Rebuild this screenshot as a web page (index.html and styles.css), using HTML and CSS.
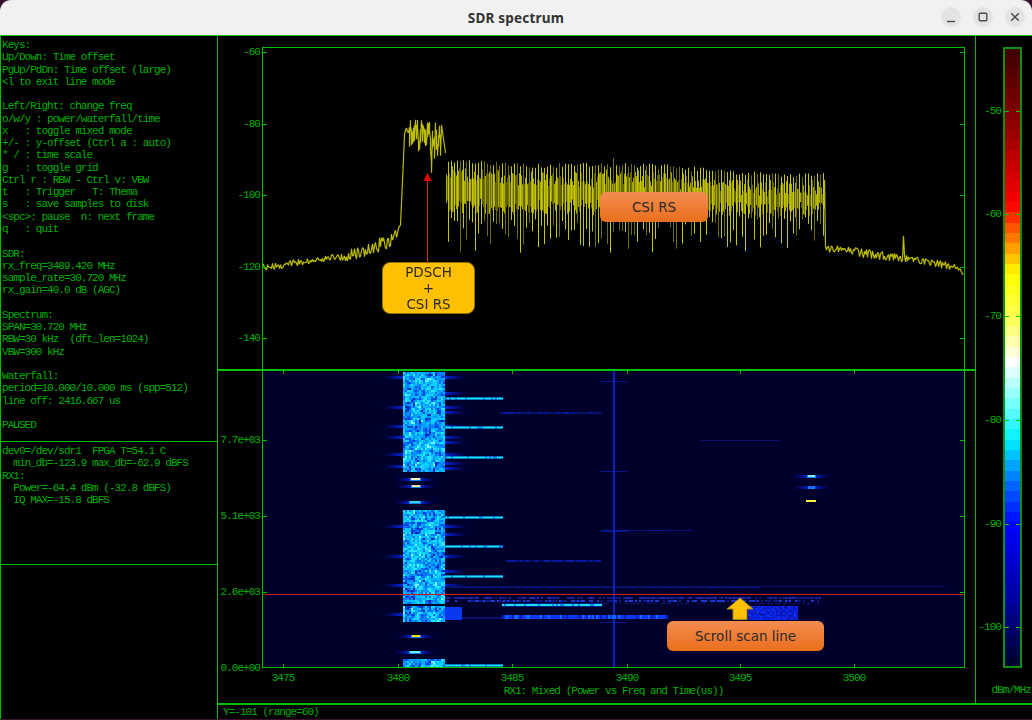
FILE: index.html
```html
<!DOCTYPE html>
<html lang="en">
<head>
<meta charset="utf-8">
<title>SDR spectrum</title>
<link rel="stylesheet" href="styles.css">
</head>
<body>
<div class="window">
  <header class="titlebar">
    <h1 class="title">SDR spectrum</h1>
    <div class="controls">
      <span class="ctl"><svg width="20" height="20" viewBox="0 0 20 20"><path d="M6 14.5h8" class="glyph"/></svg></span>
      <span class="ctl"><svg width="20" height="20" viewBox="0 0 20 20"><rect x="6.2" y="6.2" width="7.6" height="7.6" rx="1" class="glyph"/></svg></span>
      <span class="ctl"><svg width="20" height="20" viewBox="0 0 20 20"><path d="M6.2 6.2l7.6 7.6M13.8 6.2l-7.6 7.6" class="glyph"/></svg></span>
    </div>
  </header>
  <div class="app">
    <aside class="side">
      <pre class="panel panel-help">Keys:
Up/Down: Time offset
PgUp/PdDn: Time offset (large)
&lt;l to exit line mode

Left/Right: change freq
o/w/y : power/waterfall/time
x   : toggle mixed mode
+/- : y-offset (Ctrl a : auto)
* / : time scale
g   : toggle grid
Ctrl r : RBW - Ctrl v: VBW
t   : Trigger   T: Thema
s   : save samples to disk
&lt;spc&gt;: pause  n: next frame
q   : quit

SDR:
rx_freq=3489.420 MHz
sample_rate=30.720 MHz
rx_gain=40.0 dB (AGC)

Spectrum:
SPAN=30.720 MHz
RBW=30 kHz  (dft_len=1024)
VBW=300 kHz

Waterfall:
period=10.000/10.000 ms (spp=512)
line off: 2416.667 us

PAUSED</pre>
      <pre class="panel panel-dev">dev0=/dev/sdr1  FPGA T=54.1 C
  min_db=-123.9 max_db=-62.9 dBFS
RX1:
  Power=-64.4 dBm (-32.8 dBFS)
  IQ MAX=-15.8 dBFS</pre>
      <div class="panel panel-empty"></div>
    </aside>
    <div class="workspace">
      <div class="upper">
        <div class="plots">
          <section class="pane pane-spectrum">
            <div class="ylabels">
              <span class="lbl" style="top:10px">-60</span>
              <span class="lbl" style="top:82px">-80</span>
              <span class="lbl" style="top:153px">-100</span>
              <span class="lbl" style="top:225px">-120</span>
              <span class="lbl" style="top:296px">-140</span>
            </div>
            <canvas id="spectrum" class="plot" width="703" height="322"></canvas>
            <div class="callout callout-amber callout-pdsch">PDSCH<br>+<br>CSI RS</div>
            <div class="callout callout-orange callout-csi">CSI RS</div>
            <svg class="red-arrow" width="13" height="90" viewBox="0 0 13 90"><path d="M6.5 8V90" stroke="#d42020" stroke-width="1"/><path d="M6.5 0L10.5 8H2.5Z" fill="#f00000"/></svg>
          </section>
          <section class="pane pane-waterfall">
            <div class="ylabels">
              <span class="lbl" style="top:63px">7.7e+03</span>
              <span class="lbl" style="top:139px">5.1e+03</span>
              <span class="lbl" style="top:215px">2.6e+03</span>
              <span class="lbl" style="top:291px">0.0e+00</span>
            </div>
            <canvas id="waterfall" class="plot" width="703" height="297"></canvas>
            <div class="xaxis">
              <div class="xticks">
                <span class="xlbl" style="left:21px">3475</span>
                <span class="xlbl" style="left:136px">3480</span>
                <span class="xlbl" style="left:250px">3485</span>
                <span class="xlbl" style="left:365px">3490</span>
                <span class="xlbl" style="left:478px">3495</span>
                <span class="xlbl" style="left:592px">3500</span>
              </div>
              <div class="xtitle">RX1: Mixed (Power vs Freq and Time(us))</div>
            </div>
            <div class="callout callout-orange callout-scroll">Scroll scan line</div>
            <svg class="gold-arrow" width="30" height="24" viewBox="0 0 30 24"><path d="M15 1L28 12H22V22.5H8V12H2Z" fill="#ffc000" stroke="#a8861a" stroke-width="1"/></svg>
          </section>
        </div>
        <div class="scale">
          <div class="ylabels ylabels-scale">
            <span class="lbl" style="top:69px">-50</span>
            <span class="lbl" style="top:172px">-60</span>
            <span class="lbl" style="top:274px">-70</span>
            <span class="lbl" style="top:378px">-80</span>
            <span class="lbl" style="top:482px">-90</span>
            <span class="lbl" style="top:585px">-100</span>
          </div>
          <canvas id="colorbar" class="bar" width="19" height="621"></canvas>
          <div class="unit">dBm/MHz</div>
        </div>
      </div>
      <div class="status">Y=-101 (range=60)</div>
    </div>
  </div>
</div>
<script src="script.js"></script>
</body>
</html>
```
FILE: styles.css
```css
* { box-sizing: border-box; }
html, body { margin: 0; padding: 0; height: 100%; background: #3a0f2e; overflow: hidden; }
body { font-family: "Liberation Mono", monospace; }
.window { width: 1032px; height: 719px; display: flex; flex-direction: column; border-radius: 11px 11px 0 0; overflow: hidden; background: #000; }
.titlebar { height: 35px; flex: none; background: #f1f1f1; display: flex; align-items: center; justify-content: center; position: relative; }
.title { margin: 0; font: 700 13.5px "Noto Sans", sans-serif; color: #333; letter-spacing: .2px; }
.controls { position: absolute; right: 7px; top: 7px; display: flex; gap: 12px; }
.ctl { width: 20px; height: 20px; border-radius: 50%; background: #e3e3e3; display: block; }
.ctl svg { display: block; }
.glyph { fill: none; stroke: #4a4a4a; stroke-width: 1.4; }
.app { flex: 1; display: flex; min-height: 0; border-top: 1px solid #20c020; color: #00b000; font-size: 11px; line-height: 12.27px; letter-spacing: -.97px; }
.side { width: 218px; flex: none; display: flex; flex-direction: column; border-left: 1px solid #00c000; border-right: 1px solid #00c000; }
.panel { margin: 0; font: inherit; letter-spacing: inherit; padding: 3px 0 0 1px; overflow: hidden; }
.panel-help { height: 406px; flex: none; border-bottom: 1px solid #00c000; }
.panel-dev { height: 123px; flex: none; padding-top: 3px; border-bottom: 1px solid #00c000; }
.panel-empty { flex: 1; }
.workspace { flex: 1; display: flex; flex-direction: column; min-width: 0; }
.upper { flex: 1; display: flex; min-height: 0; border-bottom: 2px solid #00c000; }
.plots { width: 758px; flex: none; display: flex; flex-direction: column; border-right: 1px solid #00c000; }
.pane { position: relative; padding-left: 44px; padding-right: 10px; }
.pane-spectrum { height: 335px; flex: none; padding-top: 11px; border-bottom: 2px solid #00c000; }
.pane-waterfall { flex: 1; }
.plot { display: block; }
.ylabels { position: absolute; left: 0; top: 0; width: 43px; }
.lbl { position: absolute; right: 1px; height: 12px; line-height: 12px; white-space: pre; }
.xaxis { height: 36px; }
.xticks { position: relative; height: 18px; }
.xlbl { position: absolute; top: 4px; transform: translateX(-50%); }
.xtitle { text-align: center; margin-top: -1px; }
.scale { flex: 1; position: relative; padding: 11px 0 0 27px; }
.ylabels-scale { left: 0; width: 28px; }
.ylabels-scale .lbl { right: 3px; }
.bar { display: block; }
.unit { position: absolute; right: 1px; top: 648px; white-space: pre; }
.status { height: 14px; flex: none; padding-left: 5px; line-height: 14px; }
.callout { position: absolute; display: flex; align-items: center; justify-content: center; text-align: center; font: 13.5px/16px "DejaVu Sans", sans-serif; letter-spacing: 0; color: #2a2a2a; border-radius: 6px; }
.callout-amber { background: #ffc000; border: 1px solid #8d7215; border-radius: 8px; }
.callout-orange { background: linear-gradient(#f28c52, #ea6f1c); }
.callout-pdsch { left: 164px; top: 226px; width: 93px; height: 52px; }
.callout-csi { left: 382px; top: 156px; width: 108px; height: 30px; }
.callout-scroll { left: 449px; top: 250px; width: 157px; height: 30px; }
.red-arrow { position: absolute; left: 203px; top: 137px; }
.gold-arrow { position: absolute; left: 507px; top: 226px; }
```
FILE: script.js
```js
// Seeded pseudo-random numbers so every render draws the same capture.
let seed = 12345;
function rnd() {
  seed = (seed * 1664525 + 1013904223) >>> 0;
  return seed / 4294967296;
}
const R = (a, b) => a + (b - a) * rnd();
const GREEN = '#00c000';

function line(c, x0, y0, x1, y1, col) {
  c.strokeStyle = col;
  c.beginPath();
  c.moveTo(x0, y0);
  c.lineTo(x1, y1);
  c.stroke();
}

// ---------- spectrum (page origin 262,47) ----------
function drawSpectrum() {
  const cv = document.getElementById('spectrum');
  const c = cv.getContext('2d');
  const OX = 262, OY = 47;
  c.fillStyle = '#000';
  c.fillRect(0, 0, cv.width, cv.height);
  const Y = (v) => v - OY;
  const X = (v) => v - OX + 0.5;

  function leftFloor(x) {
    if (x < 360) return 268 - (x - 262) * 0.153;
    if (x < 390) return 253 - (x - 360) * 0.43;
    if (x < 400) return 240 - (x - 390) * 1.5;
    return 225 - (x - 400) * 22;
  }

  c.lineWidth = 1.2;
  c.strokeStyle = '#bcbc00';
  c.lineJoin = 'bevel';
  c.beginPath();
  for (let x = 262; x < 404; x++) {
    const amp = x < 340 ? 3.5 : x < 398 ? 7 : 1;
    const y = leftFloor(x) + R(-amp, amp);
    if (x === 262) c.moveTo(X(x), Y(y)); else c.lineTo(X(x), Y(y));
  }
  // in-band plateau
  for (let x = 404; x < 446; x++) {
    let y;
    if (x < 408) y = 130 + R(-3, 5);
    else if (x < 416) y = R(117, 140);
    else if (x < 441) y = R(120, 146);
    else y = 125 + (x - 441) * 7;
    if (x === 431) y = 163;
    c.lineTo(X(x), Y(y));
    if (x > 408 && x < 441) c.lineTo(X(x), Y(y + R(4, 22)));
  }
  c.stroke();

  // resource-element comb
  c.lineWidth = 1;
  for (let x = 446; x <= 824; x++) {
    const f = (x - 446) / 378;
    let top = 160 + f * 14 + Math.sin(f * 9) * 2 + R(-2, 3);
    if (x === 613) top = 158;
    const tooth = x % 3 === 1;
    if (tooth) {
      const low = rnd() < 0.35 ? R(236, 254) : R(218, 238);
      line(c, X(x), Y(top), X(x), Y(low - f * 2), rnd() < 0.75 ? '#c8c800' : '#6e6e00');
    } else {
      const low = 198 + R(0, 16) + f * 4;
      line(c, X(x), Y(top + R(6, 20)), X(x), Y(low), rnd() < 0.55 ? '#a8a800' : '#606000');
    }
  }

  // noise floor right
  c.lineWidth = 1.2;
  c.strokeStyle = '#bcbc00';
  c.beginPath();
  c.moveTo(X(824), Y(180));
  for (let x = 825; x < 964; x++) {
    let y = 248 + (x - 825) * 0.14 + R(-4.5, 4.5);
    if (x === 903) y = 236;
    if (x > 956) y = 267 + (x - 956) * 1.1 + R(-3, 3);
    c.lineTo(X(x), Y(y));
  }
  c.stroke();

  // frame
  c.fillStyle = GREEN;
  c.fillRect(0, 0, cv.width, 1);
  c.fillRect(0, 0, 1, cv.height);
  c.fillRect(702, 0, 1, cv.height);
  [52, 124, 195, 267, 338].forEach((y) => {
    c.fillRect(1, y - OY, 4, 1);
    c.fillRect(698, y - OY, 4, 1);
  });
}

// ---------- waterfall (page origin 262,371) ----------
function drawWaterfall() {
  const cv = document.getElementById('waterfall');
  const c = cv.getContext('2d');
  const OX = 262, OY = 371;
  c.fillStyle = '#00002c';
  c.fillRect(0, 0, cv.width, cv.height);
  const rect = (x, y, w, h, col) => { c.fillStyle = col; c.fillRect(x - OX, y - OY, w, h); };

  // Mottled block: coarse patches mixed with per-cell noise, mapped on a blue-to-cyan ramp.
  function speckle(x0, y0, x1, y1) {
    const ramp = ['#0028b8', '#0048e0', '#0070ff', '#0098ff', '#00b8ff', '#10d0ff', '#28e4ff', '#70f4ff'];
    const coarse = {};
    const w = 2, h = 2;
    for (let y = y0; y < y1; y += h) {
      for (let x = x0; x < x1; x += w) {
        const key = Math.floor(x / 5) + ':' + Math.floor(y / 6);
        if (coarse[key] === undefined) coarse[key] = rnd();
        const v = 0.45 * coarse[key] + 0.55 * rnd();
        rect(x, y, w, h, ramp[Math.min(ramp.length - 1, Math.floor(v * ramp.length))]);
      }
    }
  }

  function streak(x0, x1, y, h, from, to) {
    const g = c.createLinearGradient(x0 - OX, 0, x1 - OX, 0);
    g.addColorStop(0, from);
    g.addColorStop(1, to);
    c.fillStyle = g;
    c.fillRect(x0 - OX, y - OY, x1 - x0, h);
  }
  const FADE = 'rgba(0,20,200,0)';
  const GLOW = 'rgba(0,40,235,.9)';

  [376, 406, 425, 436, 453, 465, 525, 555, 584, 613].forEach((y) => streak(383, 403, y, 3, FADE, GLOW));
  [376, 392, 406, 411, 425, 436, 441, 453, 462, 467, 525, 533, 555, 570, 584].forEach((y) => streak(445, 466, y, 3, GLOW, FADE));

  // faint full-span rows
  [[412, 500, 600, 2], [560, 505, 600, 2], [530, 602, 690, 1], [586, 445, 760, 2]].forEach(([y, a, b, h]) => {
    for (let x = a; x < b; x += 3) rect(x, y, 3, h, rnd() < 0.6 ? '#0818a0' : '#05106a');
  });
  rect(700, 440, 80, 1, '#05106a');
  [381, 471, 531, 622].forEach((y) => rect(600, y, 27, 1, '#08148c'));
  rect(445, 586, 500, 1, '#051060');

  // dotted rows below/above the scan line
  for (let x = 445; x < 820; x += 2) {
    if (rnd() < 0.8) rect(x, 597, 2, 2, rnd() < 0.5 ? '#1428b8' : '#0c1880');
    if (rnd() < 0.7) rect(x, 600, 2, 2, rnd() < 0.5 ? '#1c38d0' : '#0c1880');
    if (x > 530 && rnd() < 0.4) rect(x, 603, 2, 1, '#0c1880');
  }

  // vertical spur
  rect(613, 371, 2, 296, '#0a20c0');

  // cyan lines next to the main block
  [398, 427, 457, 517, 546, 576, 665].forEach((y) => {
    for (let x = 445; x < 503; x += 2) {
      rect(x, y - 1, 2, 3, 'rgba(0,60,220,.6)');
      rect(x, y - 0.5, 2, 2, rnd() < 0.8 ? '#18e0f0' : '#1090e0');
    }
  });

  // lower long rows
  rect(445, 617, 60, 2, '#04106a');
  for (let x = 502; x < 601; x += 2) {
    rect(x, 603, 2, 4, 'rgba(0,50,200,.6)');
    rect(x, 604, 2, 2, rnd() < 0.75 ? '#18e0f0' : '#0880e0');
  }
  for (let x = 502; x < 667; x += 2) {
    const on = rnd();
    rect(x, 615, 2, 4, on < 0.6 ? '#0838f0' : on < 0.85 ? '#0868ff' : '#0520b0');
  }

  // scan-line blocks
  rect(445, 607, 17, 13, '#0838f0');
  rect(748, 606, 50, 14, '#0a20e0');
  for (let i = 0; i < 160; i++) {
    const y = 606 + Math.floor(rnd() * 14);
    const x = 748 + Math.floor(rnd() * 49);
    c.fillStyle = ['#0818b0', '#1038f0', '#0810a0', '#0c24d8'][i % 4];
    c.fillRect(x - OX, y - OY, 2, 1);
  }

  // main blocks
  speckle(403, 372, 445, 472);
  speckle(403, 510, 445, 604);
  speckle(403, 606, 445, 621);
  speckle(403, 659, 445, 667);

  // blips
  function blip(x0, x1, y, core) {
    streak(x0 - 14, x0, y - 1, 3, FADE, 'rgba(0,40,235,.8)');
    streak(x1, x1 + 14, y - 1, 3, 'rgba(0,40,235,.8)', FADE);
    rect(x0, y - 1, x1 - x0, 3, '#1880f0');
    rect(x0 + 1, y - 1, x1 - x0 - 2, 2, core);
  }
  blip(410, 421, 479, '#fff8c0');
  blip(411, 421, 486, '#ffe890');
  blip(409, 421, 502, '#30d8e0');
  blip(411, 421, 636, '#ffe000');
  blip(409, 421, 652, '#60f0ff');
  blip(807, 816, 476, '#80f0ff');
  blip(808, 815, 487, '#1868ff');
  rect(806, 500, 10, 2, '#fff040');

  // red scan line
  rect(262, 594, 702, 1, '#d01818');

  // frame
  c.fillStyle = GREEN;
  c.fillRect(0, 0, 1, cv.height);
  c.fillRect(702, 0, 1, cv.height);
  c.fillRect(0, 296, cv.width, 1);
  [21, 136, 250, 365, 478, 592].forEach((x) => {
    c.fillRect(x, 0, 1, 3);
    c.fillRect(x, 293, 1, 3);
  });
  [440, 516, 592, 667].forEach((y) => {
    c.fillRect(1, y - OY, 4, 1);
    c.fillRect(698, y - OY, 4, 1);
  });
}

// ---------- colour scale ----------
function drawColorbar() {
  const cv = document.getElementById('colorbar');
  const c = cv.getContext('2d');
  const stops = [
    [47, [58, 0, 0]], [130, [150, 0, 0]], [205, [255, 0, 0]], [240, [255, 128, 0]],
    [275, [255, 255, 0]], [320, [255, 255, 90]], [362, [255, 255, 255]], [400, [128, 255, 255]],
    [440, [0, 240, 255]], [490, [0, 90, 255]], [525, [0, 0, 255]], [600, [0, 0, 160]], [667, [0, 0, 40]]
  ];
  function colorAt(y) {
    for (let i = 1; i < stops.length; i++) {
      if (y <= stops[i][0]) {
        const [y0, a] = stops[i - 1];
        const [y1, b] = stops[i];
        const t = (y - y0) / (y1 - y0);
        return 'rgb(' + a.map((v, k) => Math.round(v + (b[k] - v) * t)).join(',') + ')';
      }
    }
    return 'rgb(0,0,40)';
  }
  const step = 620 / 60;
  for (let i = 0; i < 60; i++) {
    c.fillStyle = colorAt(47 + (i + 0.5) * step);
    c.fillRect(0, Math.round(i * step), 19, Math.ceil(step));
  }
  c.strokeStyle = '#109010';
  c.lineWidth = 2;
  c.strokeRect(1, 1, 17, 619);
  c.fillStyle = '#00d000';
  [111, 214, 316, 420, 524, 627].forEach((y) => {
    c.fillRect(2, y - 47, 4, 1);
    c.fillRect(13, y - 47, 4, 1);
  });
}

drawSpectrum();
drawWaterfall();
drawColorbar();
```
